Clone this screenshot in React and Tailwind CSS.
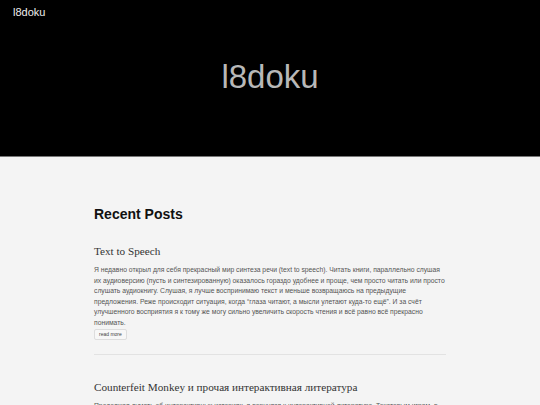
import React from 'react';

const posts = [
  {
    title: 'Text to Speech',
    body: 'Я недавно открыл для себя прекрасный мир синтеза речи (text to speech). Читать книги, параллельно слушая их аудиоверсию (пусть и синтезированную) оказалось гораздо удобнее и проще, чем просто читать или просто слушать аудиокнигу. Слушая, я лучше воспринимаю текст и меньше возвращаюсь на предыдущие предложения. Реже происходит ситуация, когда “глаза читают, а мысли улетают куда-то ещё”. И за счёт улучшенного восприятия я к тому же могу сильно увеличить скорость чтения и всё равно всё прекрасно понимать.',
  },
  {
    title: 'Counterfeit Monkey и прочая интерактивная литература',
    body: 'Продолжая думать об интерактивных историях, я вернулся к интерактивной литературе. Текстовым играм, в которых игрок вводит команды, а игра отвечает ему текстом.',
  },
];

export default function App() {
  return (
    <div className="h-[405px] overflow-hidden bg-[#f4f4f4] font-['Liberation_Sans',Arial,sans-serif]">
      {/* шапка */}
      <header className="bg-black h-[157px] border-b border-[#777] flex flex-col">
        <div className="px-[13px] pt-[5px] text-[11px] leading-[14px] text-[#eeeeee]">l8doku</div>
        <div className="flex-1 flex items-center justify-center pb-[22px]">
          <h1 className="text-[33px] leading-none text-[#b8b8b8]">l8doku</h1>
        </div>
      </header>

      <main className="w-[352px] mx-auto pt-[48px]">
        <h2 className="text-[14px] font-bold text-[#111] leading-[18px]">Recent Posts</h2>

        {posts.map((p, i) => (
          <article key={i} className={i === 0 ? 'mt-[21px] pb-[14px] border-b border-[#e2e2e2]' : 'mt-[25px]'}>
            <h3 className="text-[11.2px] leading-[15px] text-[#333] font-['Liberation_Serif',Georgia,serif]">{p.title}</h3>
            <p className="mt-[6px] text-[6.78px] leading-[10.5px] text-[#555]">{p.body}</p>
            {i === 0 && (
              <button className="block mt-[1px] px-[4px] h-[11px] text-[5px] leading-none text-[#444] bg-[#f7f7f7] border border-[#ddd] rounded-[2px]">
                read more
              </button>
            )}
          </article>
        ))}
      </main>
    </div>
  );
}
